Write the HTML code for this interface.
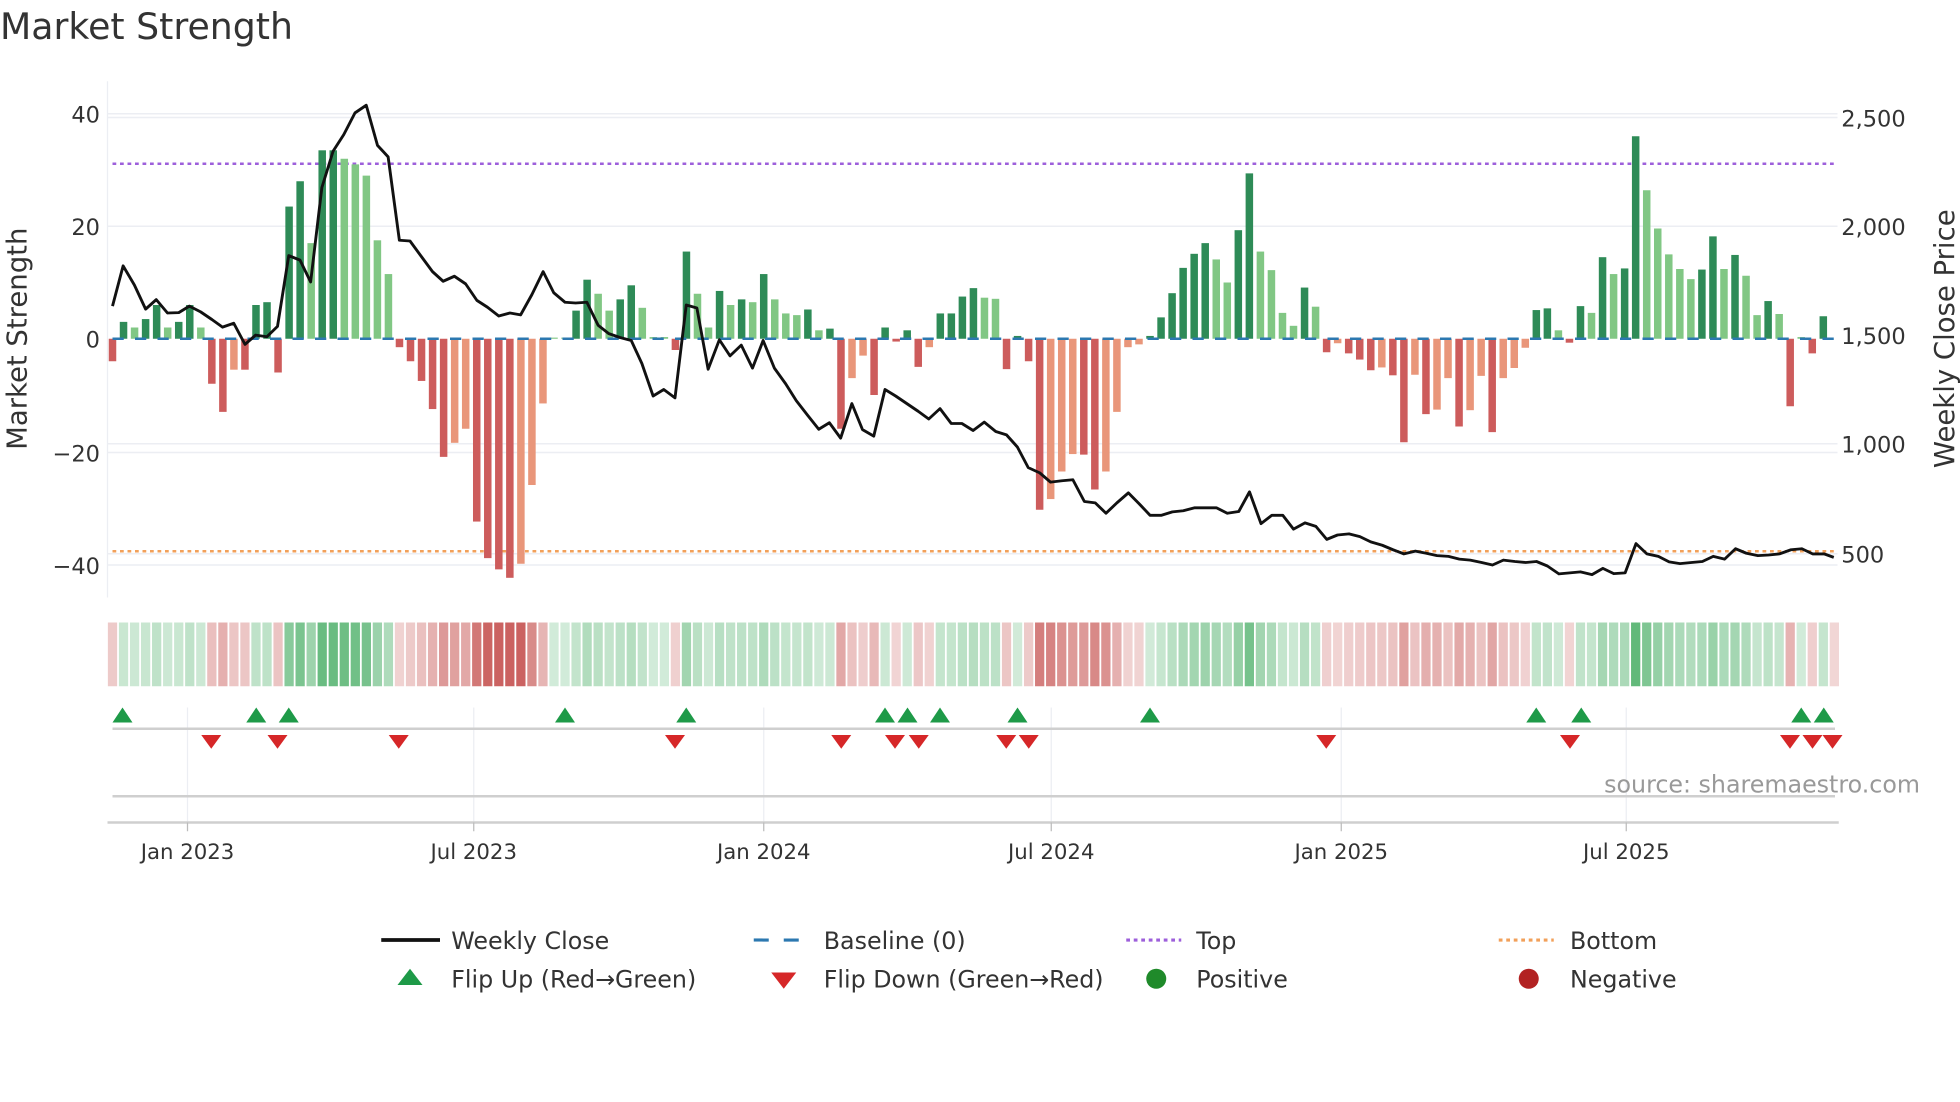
<!DOCTYPE html>
<html><head><meta charset="utf-8"><style>
html,body{margin:0;padding:0;background:#fff;width:1960px;height:1102px;overflow:hidden}
svg{display:block}
text{font-family:"DejaVu Sans","Liberation Sans",sans-serif;fill:#333}
</style></head><body>
<svg id="s" width="1960" height="1102" viewBox="0 0 1568 881.6" xmlns="http://www.w3.org/2000/svg">
<text x="0" y="31" font-size="29" fill="#333">Market Strength</text>
<g id="grid" stroke="#eceef3" stroke-width="1.2">
<line x1="86" y1="91" x2="1470" y2="91"/><line x1="86" y1="181" x2="1470" y2="181"/>
<line x1="86" y1="362" x2="1470" y2="362"/><line x1="86" y1="452" x2="1470" y2="452"/>
<line x1="86" y1="94" x2="1470" y2="94"/><line x1="86" y1="355" x2="1470" y2="355"/><line x1="86" y1="443" x2="1470" y2="443"/>
</g>
<line x1="86" y1="65" x2="86" y2="478" stroke="#eceef3" stroke-width="1"/>
<g font-size="18" text-anchor="end">
<text x="80" y="98">40</text><text x="80" y="188">20</text><text x="80" y="278">0</text>
<text x="80" y="369">−20</text><text x="80" y="459">−40</text>
</g>
<g font-size="18" text-anchor="start">
<text x="1473" y="101">2,500</text><text x="1473" y="188">2,000</text><text x="1473" y="275">1,500</text>
<text x="1473" y="362">1,000</text><text x="1473" y="450">500</text>
</g>
<text transform="translate(21,271) rotate(-90)" font-size="22" text-anchor="middle">Market Strength</text>
<text transform="translate(1563,271) rotate(-90)" font-size="22" text-anchor="middle">Weekly Close Price</text>
<line x1="90" y1="131" x2="1470" y2="131" stroke="#9d5fdb" stroke-width="2" stroke-dasharray="3,3"/>
<line x1="90" y1="441" x2="1470" y2="441" stroke="#f2a05a" stroke-width="2" stroke-dasharray="3,3"/>
<g id="bars"></g>
<g id="heat"></g>
<line x1="90" y1="271" x2="1470" y2="271" stroke="#2c78b0" stroke-width="2" stroke-dasharray="9,9"/>
<polyline id="line" fill="none" stroke="#111" stroke-width="2.3" stroke-linejoin="round"/>
<g stroke="#eceef3" stroke-width="1">
<line x1="150" y1="566" x2="150" y2="658"/><line x1="379" y1="566" x2="379" y2="658"/><line x1="611" y1="566" x2="611" y2="658"/>
<line x1="841" y1="566" x2="841" y2="658"/><line x1="1073" y1="566" x2="1073" y2="658"/><line x1="1301" y1="566" x2="1301" y2="658"/>
</g>
<line x1="90" y1="583" x2="1468" y2="583" stroke="#cfcfcf" stroke-width="2"/>
<line x1="90" y1="637" x2="1468" y2="637" stroke="#cfcfcf" stroke-width="2"/>
<line x1="86" y1="658" x2="1471" y2="658" stroke="#cfcfcf" stroke-width="2"/>
<g stroke="#bbb" stroke-width="1">
<line x1="150" y1="658" x2="150" y2="665"/><line x1="379" y1="658" x2="379" y2="665"/><line x1="611" y1="658" x2="611" y2="665"/>
<line x1="841" y1="658" x2="841" y2="665"/><line x1="1073" y1="658" x2="1073" y2="665"/><line x1="1301" y1="658" x2="1301" y2="665"/>
</g>
<g font-size="17" text-anchor="middle">
<text x="150" y="687">Jan 2023</text><text x="379" y="687">Jul 2023</text><text x="611" y="687">Jan 2024</text>
<text x="841" y="687">Jul 2024</text><text x="1073" y="687">Jan 2025</text><text x="1301" y="687">Jul 2025</text>
</g>
<g id="flips"></g>
<text x="1536" y="634" font-size="19" text-anchor="end" fill="#999" style="fill:#999">source: sharemaestro.com</text>
<g font-size="19">
<line x1="305" y1="752" x2="352" y2="752" stroke="#111" stroke-width="3"/><text x="361" y="759">Weekly Close</text>
<line x1="603" y1="752" x2="647" y2="752" stroke="#2c78b0" stroke-width="2.5" stroke-dasharray="12,12"/><text x="659" y="759">Baseline (0)</text>
<line x1="901" y1="752" x2="945" y2="752" stroke="#9d5fdb" stroke-width="2.5" stroke-dasharray="3,3"/><text x="957" y="759">Top</text>
<line x1="1199" y1="752" x2="1243" y2="752" stroke="#f2a05a" stroke-width="2.5" stroke-dasharray="3,3"/><text x="1256" y="759">Bottom</text>
<polygon points="328,775 338,788 318,788" fill="#1e9a48"/><text x="361" y="790">Flip Up (Red→Green)</text>
<polygon points="617,778 637,778 627,791" fill="#d62728"/><text x="659" y="790">Flip Down (Green→Red)</text>
<circle cx="925" cy="783" r="8" fill="#1f8a2a"/><text x="957" y="790">Positive</text>
<circle cx="1223" cy="783" r="8" fill="#b22222"/><text x="1256" y="790">Negative</text>
</g>
</svg>
<script>
var NS="http://www.w3.org/2000/svg";
var b1="-4R 3G 2g 3.5G 6G 2g 3G 6G 2g -8R -13R -5.5r -5.5R 6G 6.5G -6R 23.5G 28G 17g 33.5G 33.5G 32g 31g 29g 17.5g 11.5g -1.5R -4R -7.5R -12.5R -21R -18.5r -16r -32.5R -39R -41R -42.5R -40r -26r -11.5r 0.2g 0.2g 5G 10.5G 8g 5g 7G 9.5G 5.5g 0.3g 0.3g -2R 15.5G 8g 2g 8.5G 6g 7G 6.5g 11.5G 7g 4.5g 4.2g 5.2G 1.5g 1.8G -16R -7r -3r -10R 2G -0.5R 1.5G -5R -1.5r 4.5G 4.5G 7.5G 9G 7.3g 7.1g -5.4R 0.5G -4R -30.4R -28.5r -23.6r -20.5r -20.6R -26.8R -23.6r -13r -1.5r -1r 0.5G 3.8G 8.1G 12.6G 15.1G 17G 14.1g 10g 19.3G 29.4G 15.5g 12.2g 4.6g 2.3g 9.1G 5.7g -2.4R -0.8r -2.6R -3.7R -5.6R -5.1r -6.5R -18.4R -6.4r -13.4R -12.6r -7r -15.6R -12.7r -6.6r -16.6R -7r -5.2r -1.6r 5.1G 5.4G 1.5g -0.7R 5.8G 4.6g 14.5G 11.5g 12.5G 36G 26.4g 19.6g 15g 12.4g 10.6g 12.3G 18.2G 12.4g 14.9G 11.2g 4.2g 6.7G 4.4g -12R 0.3g -2.6R 4G".split(" ");
var col={G:"#2e8b57",g:"#81c784",R:"#cd5c5c",r:"#e9967a"};
var bars=document.getElementById("bars"),heat=document.getElementById("heat");
for(var i=0;i<b1.length;i++){
 var s=b1[i],t=s.slice(-1),v=parseFloat(s);
 var x=90+i*8.83,h=Math.abs(v)*4.5,y=v>=0?271-h:271;
 var r=document.createElementNS(NS,"rect");
 r.setAttribute("x",x-3);r.setAttribute("y",y);r.setAttribute("width",6);r.setAttribute("height",Math.max(h,0.5));
 r.setAttribute("fill",col[t]);bars.appendChild(r);
 var a=0.25+0.7*Math.min(Math.abs(v)/40,1);
 var c=document.createElementNS(NS,"rect");
 c.setAttribute("x",x-3.7);c.setAttribute("y",498);c.setAttribute("width",7.4);c.setAttribute("height",51);
 c.setAttribute("fill",v>=0?"rgba(76,175,104,"+a+")":"rgba(200,90,88,"+a+")");heat.appendChild(c);
}
var ex=document.createElementNS(NS,"rect");
ex.setAttribute("x",90+b1.length*8.83-3.7);ex.setAttribute("y",498);ex.setAttribute("width",7.4);ex.setAttribute("height",51);
ex.setAttribute("fill","rgba(200,90,88,0.25)");heat.appendChild(ex);
var p1=[[180,800],[197,695],[215,745],[233,808],[250,783],[268,818],[286,817],[303,800],[321,815],[339,835],[356,855],[374,845],[392,900],[409,876],[427,880],[444,853],[462,668],[480,680],[497,737],[515,490],[533,395],[550,352],[568,295],[586,275],[604,380],[621,410],[639,628],[656,630],[674,670],[692,710],[709,735],[727,722],[745,742],[763,785],[780,803],[798,826],[816,818],[833,823],[851,770],[869,710],[886,765],[904,790],[921,792],[939,790],[957,850],[974,872],[992,882],[1010,890],[1027,950],[1045,1035],[1062,1018],[1080,1040],[1098,797],[1115,805],[1133,965],[1151,888],[1168,930],[1186,902],[1204,962],[1221,890],[1239,962],[1257,1003],[1274,1047],[1292,1085],[1310,1122],[1327,1105],[1345,1145],[1363,1055],[1380,1123],[1398,1140],[1416,1018],[1433,1035],[1451,1055],[1469,1075],[1486,1095],[1504,1068],[1522,1107],[1539,1107],[1557,1125]];
var p2=[[38,1048],[56,1075],[73,1085],[90,1120],[107,1180],[125,1195],[142,1222],[160,1218],[177,1215],[195,1278],[212,1282],[229,1312],[246,1282],[264,1253],[281,1285],[298,1318],[316,1318],[333,1308],[350,1305],[368,1296],[385,1296],[402,1296],[419,1312],[437,1307],[454,1250],[472,1342],[489,1318],[506,1318],[523,1358],[541,1340],[558,1350],[575,1388],[592,1375],[610,1372],[627,1380],[644,1395],[662,1405],[679,1418],[696,1430],[714,1422],[731,1428],[748,1435],[766,1437],[783,1445],[800,1448],[818,1455],[835,1462],[852,1448],[870,1452],[887,1455],[904,1452],[921,1465],[939,1488],[956,1485],[973,1482],[991,1490],[1008,1472],[1025,1487],[1043,1485],[1060,1400],[1077,1430],[1095,1437],[1112,1453],[1129,1458],[1147,1455],[1164,1452],[1181,1437],[1199,1445],[1216,1415],[1233,1428],[1251,1435],[1268,1433],[1285,1430],[1303,1418],[1320,1415],[1337,1430],[1355,1430],[1370,1440]];
var pts=[];
p1.forEach(function(p){pts.push((p[0]/2).toFixed(1)+","+(p[1]/3.267).toFixed(1));});
p2.forEach(function(p){pts.push((768+p[0]/1.96).toFixed(1)+","+(94+(p[1]-165)*0.276).toFixed(1));});
document.getElementById("line").setAttribute("points",pts.join(" "));
var ups=[98,205,231,452,549,708,726,752,814,920,1229,1265,1441,1459];
var dns=[169,222,319,540,673,716,735,805,823,1061,1256,1432,1450,1466];
var f=document.getElementById("flips");
ups.forEach(function(x){var p=document.createElementNS(NS,"polygon");p.setAttribute("points",x+",566 "+(x+8)+",578 "+(x-8)+",578");p.setAttribute("fill","#1e9a48");f.appendChild(p);});
dns.forEach(function(x){var p=document.createElementNS(NS,"polygon");p.setAttribute("points",(x-8)+",588 "+(x+8)+",588 "+x+",599");p.setAttribute("fill","#d62728");f.appendChild(p);});
</script>
</body></html>
